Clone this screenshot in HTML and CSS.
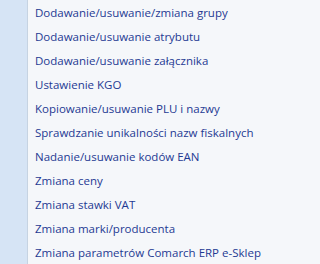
FILE: index.html
```html
<!DOCTYPE html>
<html lang="pl">
<head>
<meta charset="utf-8">
<link rel="stylesheet" href="styles.css">
</head>
<body>
<div class="menu">
  <div class="strip"></div>
  <ul class="items">
    <li class="item">Dodawanie/usuwanie/zmiana grupy</li>
    <li class="item">Dodawanie/usuwanie atrybutu</li>
    <li class="item">Dodawanie/usuwanie załącznika</li>
    <li class="item">Ustawienie KGO</li>
    <li class="item">Kopiowanie/usuwanie PLU i nazwy</li>
    <li class="item">Sprawdzanie unikalności nazw fiskalnych</li>
    <li class="item">Nadanie/usuwanie kodów EAN</li>
    <li class="item">Zmiana ceny</li>
    <li class="item">Zmiana stawki VAT</li>
    <li class="item">Zmiana marki/producenta</li>
    <li class="item">Zmiana parametrów Comarch ERP e-Sklep</li>
  </ul>
</div>
</body>
</html>
```
FILE: styles.css
```css
html, body {
  margin: 0;
  padding: 0;
  background: #f5f7fa;
}
.menu {
  display: flex;
  width: 282px;
  height: 264px;
  overflow: hidden;
}
.strip {
  width: 27px;
  flex: none;
  background: #d6e4f5;
  border-right: 1px solid #c6d3e2;
}
.items {
  list-style: none;
  margin: 0;
  padding: 1px 0 0 7px;
  font-family: "Open Sans", "Noto Sans", sans-serif;
  font-size: 11.5px;
  color: #1f3a93;
}
.item {
  height: 24px;
  line-height: 24px;
  white-space: nowrap;
}
```
